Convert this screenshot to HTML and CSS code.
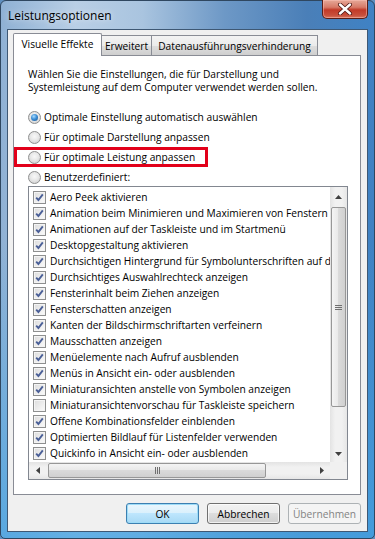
FILE: index.html
```html
<!DOCTYPE html>
<html lang="de">
<head>
<meta charset="utf-8">
<title>Leistungsoptionen</title>
<link rel="stylesheet" href="styles.css">
</head>
<body>
<div class="window">
  <div class="titlebar">
    <span class="title">Leistungsoptionen</span>
    <div class="close">
      <svg width="16" height="12" viewBox="0 0 16 12"><path d="M3 1.5 L13 10.5 M13 1.5 L3 10.5" stroke="#4a1410" stroke-width="4" stroke-linecap="round"/><path d="M3 1.5 L13 10.5 M13 1.5 L3 10.5" stroke="#fff" stroke-width="2.4" stroke-linecap="round"/></svg>
    </div>
  </div>
  <div class="client">
    <div class="tabs">
      <div class="tab active">Visuelle Effekte</div>
      <div class="tab tab-erw">Erweitert</div>
      <div class="tab tab-dep">Datenausführungsverhinderung</div>
    </div>
    <div class="panel">
      <p class="intro">Wählen Sie die Einstellungen, die für Darstellung und<br>Systemleistung auf dem Computer verwendet werden sollen.</p>
      <div class="radios">
        <div class="radio-row"><span class="rb checked"></span>Optimale Einstellung automatisch auswählen</div>
        <div class="radio-row"><span class="rb"></span>Für optimale Darstellung anpassen</div>
        <div class="radio-row marked"><span class="rb"></span>Für optimale Leistung anpassen</div>
        <div class="radio-row"><span class="rb"></span>Benutzerdefiniert:</div>
      </div>
      <div class="listbox">
        <ul class="items">
          <li><span class="cb on"></span>Aero Peek aktivieren</li>
          <li><span class="cb on"></span>Animation beim Minimieren und Maximieren von Fenstern</li>
          <li><span class="cb on"></span>Animationen auf der Taskleiste und im Startmenü</li>
          <li><span class="cb on"></span>Desktopgestaltung aktivieren</li>
          <li><span class="cb on"></span>Durchsichtigen Hintergrund für Symbolunterschriften auf dem Desktop</li>
          <li><span class="cb on"></span>Durchsichtiges Auswahlrechteck anzeigen</li>
          <li><span class="cb on"></span>Fensterinhalt beim Ziehen anzeigen</li>
          <li><span class="cb on"></span>Fensterschatten anzeigen</li>
          <li><span class="cb on"></span>Kanten der Bildschirmschriftarten verfeinern</li>
          <li><span class="cb on"></span>Mausschatten anzeigen</li>
          <li><span class="cb on"></span>Menüelemente nach Aufruf ausblenden</li>
          <li><span class="cb on"></span>Menüs in Ansicht ein- oder ausblenden</li>
          <li><span class="cb on"></span>Miniaturansichten anstelle von Symbolen anzeigen</li>
          <li><span class="cb"></span>Miniaturansichtenvorschau für Taskleiste speichern</li>
          <li><span class="cb on"></span>Offene Kombinationsfelder einblenden</li>
          <li><span class="cb on"></span>Optimierten Bildlauf für Listenfelder verwenden</li>
          <li><span class="cb on"></span>Quickinfo in Ansicht ein- oder ausblenden</li>
        </ul>
        <div class="vscroll">
          <div class="sb-btn up"><svg width="7" height="4" viewBox="0 0 7 4"><path d="M0 4 L3.5 0 L7 4Z" fill="#404040"/></svg></div>
          <div class="vthumb"><span class="grip-v"></span></div>
          <div class="sb-fill"></div>
          <div class="sb-btn down"><svg width="7" height="4" viewBox="0 0 7 4"><path d="M0 0 L3.5 4 L7 0Z" fill="#404040"/></svg></div>
        </div>
        <div class="hscroll">
          <div class="sb-btn left"><svg width="4" height="7" viewBox="0 0 4 7"><path d="M4 0 L0 3.5 L4 7Z" fill="#404040"/></svg></div>
          <div class="hthumb"><span class="grip-h"></span></div>
          <div class="sb-fill"></div>
          <div class="sb-btn right"><svg width="4" height="7" viewBox="0 0 4 7"><path d="M0 0 L4 3.5 L0 7Z" fill="#404040"/></svg></div>
        </div>
        <div class="corner"></div>
      </div>
    </div>
    <div class="buttons">
      <div class="btn default">OK</div>
      <div class="btn">Abbrechen</div>
      <div class="btn disabled">Übernehmen</div>
    </div>
  </div>
</div>
</body>
</html>
```

FILE: styles.css
```css
* { box-sizing: border-box; }
html, body { margin: 0; padding: 0; }
body {
  width: 375px;
  height: 539px;
  overflow: hidden;
  background: #5f8fbf;
  font-family: "Open Sans", "Noto Sans", sans-serif;
  font-size: 10.2px;
  color: #000;
}
.window {
  width: 375px;
  height: 539px;
  display: flex;
  flex-direction: column;
  padding: 0 6px 6px;
  border: 1px solid #2f4760;
  border-radius: 6px 6px 5px 5px;
  background:
    linear-gradient(to bottom, rgba(255,255,255,0) 0%, rgba(255,255,255,0) 45%, rgba(70,165,228,0.75) 100%),
    linear-gradient(to right, #8fb1d4 0%, #b9cfe6 20%, #a9c4df 38%, #6d98c6 60%, #4a7fb8 82%, #3f82c4 100%);
}
.titlebar {
  height: 28px;
  display: flex;
  align-items: flex-start;
  flex: none;
}
.title {
  font-size: 12px;
  margin-top: 6px;
  margin-left: 1px;
  color: #000;
  text-shadow: 0 0 6px rgba(255,255,255,0.8);
}
.close {
  margin-left: auto;
  width: 46px;
  height: 19px;
  margin-top: -1px;
  border: 1px solid #5a1e17;
  border-top: none;
  border-radius: 0 0 5px 5px;
  background: linear-gradient(to bottom, #e6a998 0%, #d77a68 40%, #c23a28 55%, #c8503c 85%, #d8765f 100%);
  display: flex;
  align-items: center;
  justify-content: center;
  box-shadow: inset 0 0 0 1px rgba(255,200,190,0.45);
}
.client {
  flex: 1;
  background: #f0f0f0;
  border: 1px solid #3e5874;
  padding: 3px 6px 0 5px;
  display: flex;
  flex-direction: column;
}
.tabs {
  display: flex;
  align-items: flex-end;
  height: 22px;
  flex: none;
}
.tab {
  height: 20px;
  border: 1px solid #898c95;
  border-bottom: none;
  border-left: none;
  background: linear-gradient(to bottom, #f3f3f3 0%, #ebebeb 50%, #dedede 50%, #cfcfcf 100%);
  display: flex;
  align-items: center;
  justify-content: center;
  white-space: nowrap;
  padding-top: 1px;
}
.tab.active {
  height: 23px;
  margin-bottom: -1px;
  position: relative;
  z-index: 1;
  background: #fff;
  border-left: 1px solid #898c95;
  border-radius: 2px 2px 0 0;
  width: 89px;
  padding-top: 0;
  padding-bottom: 2px;
}
.tab-erw { width: 50px; }
.tab-dep { width: 166px; }
.panel {
  height: 440px;
  flex: none;
  border: 1px solid #898c95;
  background: #fff;
  padding: 12px 13px 0 14px;
  display: flex;
  flex-direction: column;
}
.intro {
  margin: 0;
  line-height: 13px;
}
.radios {
  margin-top: 13px;
  display: flex;
  flex-direction: column;
}
.radio-row {
  height: 20px;
  display: flex;
  align-items: center;
}
.radio-row.marked {
  margin-left: -14px;
  padding-left: 11px;
  width: 194px;
  border: 3px solid #e2001a;
}
.rb {
  width: 13px;
  height: 13px;
  border-radius: 50%;
  border: 1px solid #8e8f8f;
  background: radial-gradient(circle at 50% 40%, #f8f8f8 0%, #e8e8e8 45%, #c9c9c9 100%);
  margin-right: 3px;
  flex: none;
  display: flex;
  align-items: center;
  justify-content: center;
}
.rb.checked::after {
  content: "";
  width: 7px;
  height: 7px;
  border-radius: 50%;
  background: radial-gradient(circle at 40% 35%, #a9dcff 0%, #3d8fd6 45%, #174f8c 100%);
}
.listbox {
  margin-top: -1px;
  width: 320px;
  height: 294px;
  border: 1px solid #828790;
  background: #fff;
  display: grid;
  grid-template-columns: 301px 17px;
  grid-template-rows: 275px 17px;
}
.items {
  list-style: none;
  margin: 0;
  padding: 2px 0 0 4px;
  overflow: hidden;
  white-space: nowrap;
}
.items li {
  height: 16px;
  display: flex;
  align-items: center;
}
.cb {
  width: 13px;
  height: 13px;
  flex: none;
  margin-right: 4px;
  border: 1px solid #8e8f8f;
  background: linear-gradient(to bottom right, #dcdcdc, #fbfbfb);
  box-shadow: inset 0 0 0 1px #f4f4f4;
  position: relative;
}
.cb.on {
  background:
    url("data:image/svg+xml,%3Csvg xmlns='http://www.w3.org/2000/svg' width='11' height='11' viewBox='0 0 11 11'%3E%3Cpath d='M2.2 5.6 L4.4 8 L8.8 2.4' fill='none' stroke='%234a5f97' stroke-width='1.9'/%3E%3C/svg%3E") center/11px 11px no-repeat,
    linear-gradient(to bottom right, #dcdcdc, #fbfbfb);
}
.vscroll {
  display: flex;
  flex-direction: column;
  background: linear-gradient(to right, #e3e3e3, #f1f1f1 30%, #f1f1f1 70%, #e6e6e6);
}
.hscroll {
  display: flex;
  background: linear-gradient(to bottom, #e3e3e3, #f1f1f1 30%, #f1f1f1 70%, #e6e6e6);
}
.corner { background: #f0f0f0; }
.sb-btn {
  flex: none;
  width: 17px;
  height: 17px;
  display: flex;
  align-items: center;
  justify-content: center;
}
.sb-btn.up { height: 20px; }
.sb-fill { flex: 1; }
.vthumb {
  height: 200px;
  margin: 0 1px;
  border: 1px solid #979797;
  border-radius: 2px;
  background: linear-gradient(to right, #f4f4f4 0%, #e9e9e9 45%, #dadada 50%, #d0d0d0 100%);
  display: flex;
  align-items: center;
  justify-content: center;
}
.grip-v {
  width: 7px;
  height: 5px;
  background: repeating-linear-gradient(to bottom, #6f6f6f 0 1px, transparent 1px 2px);
}
.hthumb {
  width: 218px;
  margin: 1px 0 1px 2px;
  height: 15px;
  border: 1px solid #979797;
  border-radius: 2px;
  background: linear-gradient(to bottom, #f4f4f4 0%, #e9e9e9 45%, #dadada 50%, #d0d0d0 100%);
  display: flex;
  align-items: center;
  justify-content: center;
}
.grip-h {
  width: 5px;
  height: 7px;
  background: repeating-linear-gradient(to right, #6f6f6f 0 1px, transparent 1px 2px);
}
.buttons {
  margin-top: 8px;
  display: flex;
  justify-content: flex-end;
  gap: 8px;
}
.btn {
  width: 73px;
  height: 21px;
  border: 1px solid #707070;
  border-radius: 3px;
  background: linear-gradient(to bottom, #f2f2f2 0%, #ebebeb 50%, #dddddd 50%, #cfcfcf 100%);
  box-shadow: inset 0 0 0 1px rgba(255,255,255,0.7);
  display: flex;
  align-items: center;
  justify-content: center;
}
.btn.default {
  border-color: #3c7fb1;
  background: linear-gradient(to bottom, #eaf6fd 0%, #d9f0fc 50%, #bee6fd 50%, #a7d9f5 100%);
  box-shadow: inset 0 0 0 1px #9edcf7;
}
.btn.disabled {
  border-color: #adb2b5;
  background: #f4f4f4;
  color: #838383;
  box-shadow: none;
}
```
